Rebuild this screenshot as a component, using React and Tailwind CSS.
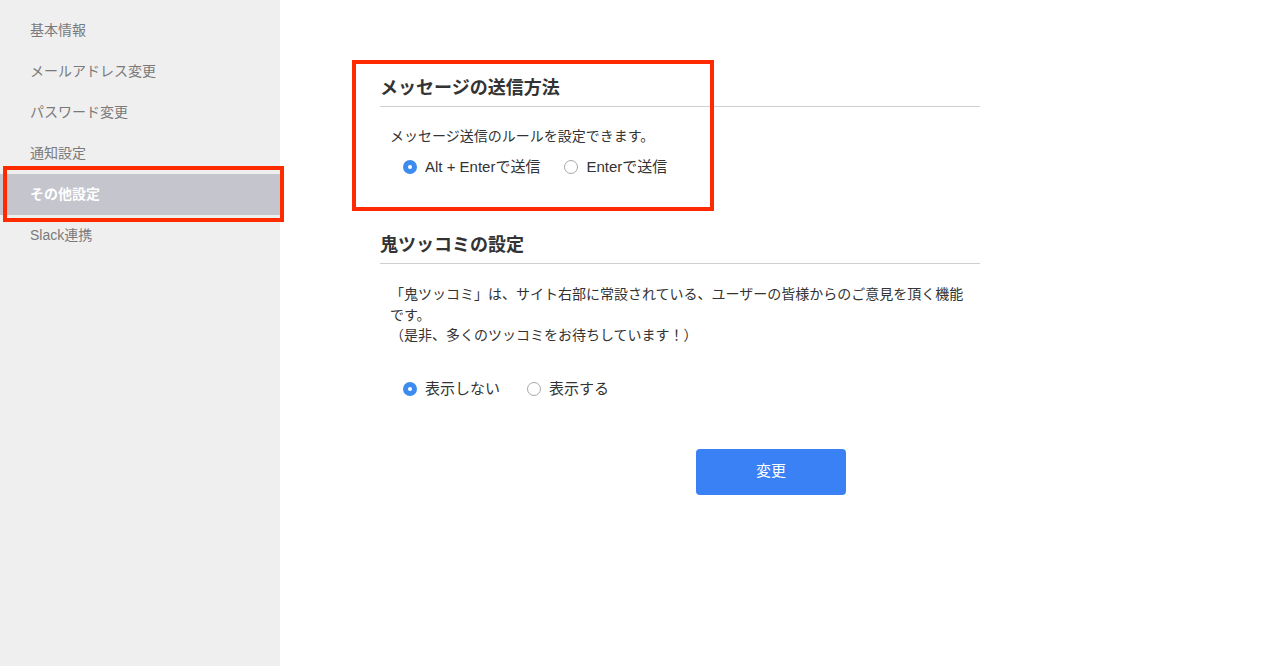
import React, { useState } from 'react';

const menuItems = ['基本情報', 'メールアドレス変更', 'パスワード変更', '通知設定', 'その他設定', 'Slack連携'];

const font = { fontFamily: '"Liberation Sans", "Noto Sans CJK JP", sans-serif' };

const Radio = ({ checked, label, onClick }) => (
  <label className="flex items-center cursor-pointer" onClick={onClick}>
    {checked ? (
      <span className="w-[14px] h-[14px] rounded-full bg-[#3c8cf0] flex items-center justify-center">
        <span className="w-[4px] h-[4px] rounded-full bg-white"></span>
      </span>
    ) : (
      <span className="w-[14px] h-[14px] rounded-full border border-[#a8a8a8] bg-white"></span>
    )}
    <span className="ml-[8px] text-[15px] leading-[20px] text-[#333]">{label}</span>
  </label>
);

const App = () => {
  const [sendMode, setSendMode] = useState('alt');
  const [tsukkomi, setTsukkomi] = useState('hide');
  const active = 'その他設定';

  return (
    <div className="relative flex min-h-[666px] bg-white" style={font}>
      {/* Sidebar */}
      <aside className="w-[280px] shrink-0 bg-[#efefef] pt-[10px]">
        {menuItems.map(item => (
          <div
            key={item}
            className={
              item === active
                ? 'h-[41px] flex items-center pl-[30px] text-[14px] font-bold text-white bg-[#c4c5cd]'
                : 'h-[41px] flex items-center pl-[30px] text-[14px] text-[#7a7a7a]'
            }
          >
            {item}
          </div>
        ))}
      </aside>

      {/* Main */}
      <main className="flex-1 pl-[100px] pt-[75px]">
        <div className="w-[600px]">
          {/* Message send */}
          <section>
            <h2 className="text-[18px] leading-[26px] font-bold text-[#333] pb-[5px] border-b border-[#cfcfcf]">
              メッセージの送信方法
            </h2>
            <p className="mt-[19px] pl-[10px] text-[14px] leading-[20px] text-[#333]">
              メッセージ送信のルールを設定できます。
            </p>
            <div className="mt-[11px] pl-[23px] flex gap-[24px]">
              <Radio checked={sendMode === 'alt'} label="Alt + Enterで送信" onClick={() => setSendMode('alt')} />
              <Radio checked={sendMode === 'enter'} label="Enterで送信" onClick={() => setSendMode('enter')} />
            </div>
          </section>

          {/* Oni tsukkomi */}
          <section className="mt-[55px]">
            <h2 className="text-[18px] leading-[26px] font-bold text-[#333] pb-[5px] border-b border-[#cfcfcf]">
              鬼ツッコミの設定
            </h2>
            <p className="mt-[20px] pl-[10px] pr-[12px] text-[14px] leading-[20.5px] text-[#333]">
              「鬼ツッコミ」は、サイト右部に常設されている、ユーザーの皆様からのご意見を頂く機能です。
              <br />
              （是非、多くのツッコミをお待ちしています！）
            </p>
            <div className="mt-[33px] pl-[23px] flex gap-[27px]">
              <Radio checked={tsukkomi === 'hide'} label="表示しない" onClick={() => setTsukkomi('hide')} />
              <Radio checked={tsukkomi === 'show'} label="表示する" onClick={() => setTsukkomi('show')} />
            </div>
          </section>

          <button className="mt-[50px] ml-[316px] w-[150px] h-[46px] rounded-[4px] bg-[#3a81f5] text-white text-[15px]">
            変更
          </button>
        </div>
      </main>

      {/* Annotation boxes */}
      <div className="absolute left-[3px] top-[166px] w-[281px] h-[56px] border-[4px] border-[#ff2a00] pointer-events-none"></div>
      <div className="absolute left-[352px] top-[60px] w-[362px] h-[151px] border-[4px] border-[#ff2a00] pointer-events-none"></div>
    </div>
  );
};

export default App;
